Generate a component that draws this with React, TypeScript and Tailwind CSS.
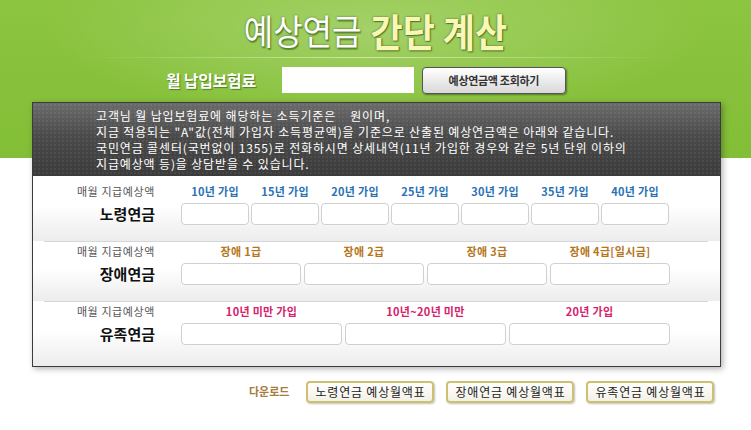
import React from "react";

const row1Labels = ["10년 가입", "15년 가입", "20년 가입", "25년 가입", "30년 가입", "35년 가입", "40년 가입"];
const row2Labels = ["장애 1급", "장애 2급", "장애 3급", "장애 4급[일시금]"];
const row3Labels = ["10년 미만 가입", "10년~20년 미만", "20년 가입"];

function Box({ w }: { w: string }) {
  return <div className={`${w} h-[22px] rounded-[4px] border border-[#d0d0d0] bg-white`} />;
}

export default function App() {
  return (
    <div className="w-[751px] h-[430px] overflow-hidden font-['Noto_Sans_CJK_KR',sans-serif] bg-[radial-gradient(ellipse_330px_90px_at_50%_30px,rgba(255,255,255,0.22),rgba(255,255,255,0)),linear-gradient(to_bottom,#8cc540_0px,#83be37_158px,#ffffff_158px)]">
      {/* Title */}
      <div className="h-[57px] flex items-center justify-center pt-[2px]">
        <span className="inline-block scale-y-[1.1] text-[32px] leading-none text-white [text-shadow:0_0_2px_rgba(40,80,10,0.7),1px_1px_1px_rgba(40,80,10,0.5)]">
          예상연금
        </span>
        <span className="inline-block ml-[9px] scale-y-[1.1] text-[35px] leading-none font-bold text-[#f9f6b6] [text-shadow:0_0_2px_rgba(40,80,10,0.8),1px_1px_1px_rgba(40,80,10,0.6)]">
          간단 계산
        </span>
      </div>
      {/* separator */}
      <div className="mx-[85px] h-px bg-[linear-gradient(to_right,rgba(255,255,255,0),rgba(220,240,180,0.8),rgba(255,255,255,0))]" />
      {/* form row */}
      <div className="mt-[8px] h-[28px] flex items-center pl-[166px]">
        <span className="text-[16px] font-bold tracking-[-0.3px] text-white [text-shadow:1px_1px_1px_rgba(40,80,10,0.6)]">
          월 납입보험료
        </span>
        <div className="ml-[26px] w-[132px] h-[26px] bg-white" />
        <button className="ml-[8px] w-[144px] h-[27px] rounded-[4px] border border-[#555] bg-[linear-gradient(to_bottom,#ffffff,#d9d9d9)] shadow-[1px_1px_2px_rgba(0,0,0,0.4)] text-[11px] font-bold text-[#333] tracking-[-0.3px]">
          예상연금액 조회하기
        </button>
      </div>
      {/* main box */}
      <div className="mt-[8px] ml-[32px] w-[689px] border border-[#3c3c3c] bg-white shadow-[2px_2px_6px_rgba(0,0,0,0.3)]">
        <div className="h-[73px] pl-[63px] pt-[5px] bg-[radial-gradient(rgba(255,255,255,0.06)_1px,transparent_1px),linear-gradient(to_bottom,#6b6b6b,#4a4a4a_45%,#3b3b3b)] bg-[length:4px_4px,100%_100%] text-[12px] leading-[16px] text-white tracking-[0.85px]">
          <div>고객님 월 납입보험료에 해당하는 소득기준은 &nbsp;&nbsp; 원이며,</div>
          <div>지금 적용되는 "A"값(전체 가입자 소득평균액)을 기준으로 산출된 예상연금액은 아래와 같습니다.</div>
          <div>국민연금 콜센터(국번없이 1355)로 전화하시면 상세내역(11년 가입한 경우와 같은 5년 단위 이하의</div>
          <div>지급예상액 등)을 상담받을 수 있습니다.</div>
        </div>

        {/* row 1 */}
        <div className="pt-[8px] pb-[15px] bg-[linear-gradient(to_bottom,#ffffff_45%,#ececec)]">
          <div className="flex items-center h-[14px]">
            <div className="w-[122px] text-right text-[11px] text-[#555] tracking-[0.6px]">매월 지급예상액</div>
            <div className="ml-[26px] flex gap-[2px]">
              {row1Labels.map((l) => (
                <div key={l} className="w-[68px] text-center text-[11px] font-bold text-[#2a72b5] tracking-[0.3px]">
                  {l}
                </div>
              ))}
            </div>
          </div>
          <div className="flex items-center mt-[5px]">
            <div className="w-[122px] text-right text-[15px] font-bold text-[#111]">노령연금</div>
            <div className="ml-[26px] flex gap-[2px]">
              {row1Labels.map((l) => (
                <Box key={l} w="w-[68px]" />
              ))}
            </div>
          </div>
        </div>
        <div className="ml-[11px] mr-[12px] h-px bg-[#d6d6d6]" />

        {/* row 2 */}
        <div className="pt-[3px] pb-[16px] bg-[linear-gradient(to_bottom,#ffffff_45%,#ececec)]">
          <div className="flex items-center h-[14px]">
            <div className="w-[122px] text-right text-[11px] text-[#555] tracking-[0.6px]">매월 지급예상액</div>
            <div className="ml-[26px] flex gap-[3px]">
              {row2Labels.map((l) => (
                <div key={l} className="w-[120px] text-center text-[11px] font-bold text-[#b5761c] tracking-[0.3px]">
                  {l}
                </div>
              ))}
            </div>
          </div>
          <div className="flex items-center mt-[4px]">
            <div className="w-[122px] text-right text-[15px] font-bold text-[#111]">장애연금</div>
            <div className="ml-[26px] flex gap-[3px]">
              {row2Labels.map((l) => (
                <Box key={l} w="w-[120px]" />
              ))}
            </div>
          </div>
        </div>
        <div className="ml-[11px] mr-[12px] h-px bg-[#d6d6d6]" />

        {/* row 3 */}
        <div className="pt-[2px] pb-[20px] bg-[linear-gradient(to_bottom,#ffffff_45%,#ececec)]">
          <div className="flex items-center h-[14px]">
            <div className="w-[122px] text-right text-[11px] text-[#555] tracking-[0.6px]">매월 지급예상액</div>
            <div className="ml-[26px] flex gap-[3px]">
              {row3Labels.map((l) => (
                <div key={l} className="w-[161px] text-center text-[11px] font-bold text-[#d6226c] tracking-[0.3px]">
                  {l}
                </div>
              ))}
            </div>
          </div>
          <div className="flex items-center mt-[5px]">
            <div className="w-[122px] text-right text-[15px] font-bold text-[#111]">유족연금</div>
            <div className="ml-[26px] flex gap-[3px]">
              {row3Labels.map((l) => (
                <Box key={l} w="w-[161px]" />
              ))}
            </div>
          </div>
        </div>
      </div>

      {/* download row */}
      <div className="mt-[14px] pl-[249px] flex items-center">
        <span className="text-[11px] font-bold text-[#a77a3e]">다운로드</span>
        <div className="ml-[17px] flex gap-[12px]">
          {["노령연금 예상월액표", "장애연금 예상월액표", "유족연금 예상월액표"].map((t) => (
            <button
              key={t}
              className="w-[128px] h-[22px] rounded-[4px] border-2 border-[#cdc170] bg-[linear-gradient(to_bottom,#ffffff,#f3f1e6)] shadow-[1px_1px_2px_rgba(0,0,0,0.25)] text-[12px] text-[#222] tracking-[0.8px] leading-none"
            >
              {t}
            </button>
          ))}
        </div>
      </div>
    </div>
  );
}
